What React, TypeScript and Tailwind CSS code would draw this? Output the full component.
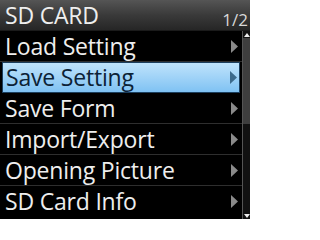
const items = [
  "Load Setting",
  "Save Setting",
  "Save Form",
  "Import/Export",
  "Opening Picture",
  "SD Card Info",
];

// 선택된 항목 (파란색 하이라이트)
const selected = 1;

function Arrow({ dark }: { dark?: boolean }) {
  return (
    <svg width="7" height="13" viewBox="0 0 7 13" className="shrink-0">
      <path d="M0 0 L7 6.5 L0 13 Z" fill={dark ? "#3c6a8c" : "#8a8a8a"} />
    </svg>
  );
}

export default function App() {
  return (
    <div
      className="w-[250px] h-[219px] bg-black flex flex-col overflow-hidden"
      style={{ fontFamily: '"Open Sans", "Noto Sans", sans-serif' }}
    >
      {/* 헤더 */}
      <div className="h-[31px] shrink-0 flex items-end justify-between pl-[5px] pr-[2px] bg-gradient-to-b from-[#555555] via-[#3a3a3a] to-[#262626] border-b border-[#1a1a1a]">
        <span className="text-[23px] leading-[29px] text-[#eeeeee] tracking-[-0.2px]">
          SD CARD
        </span>
        <span className="text-[17px] leading-[18px] text-[#d8d8d8] mb-[1px]">1/2</span>
      </div>

      <div className="flex-1 flex">
        {/* 목록 */}
        <div className="flex-1 flex flex-col">
          {items.map((label, i) => {
            const active = i === selected;
            return (
              <div
                key={label}
                className={
                  active
                    ? "h-[31px] flex items-center justify-between pl-[3px] pr-[2px] mx-[2px] bg-gradient-to-b from-[#bfe3fb] to-[#7fc2f3] border border-[#1c3f5e]"
                    : "h-[31px] flex items-center justify-between pl-[5px] pr-[4px] border-b border-[#2e2e2e] last:border-b-0"
                }
              >
                <span
                  className={
                    active
                      ? "text-[23px] leading-none text-[#0c2236] tracking-[-0.2px]"
                      : "text-[23px] leading-none text-[#eeeeee] tracking-[-0.2px]"
                  }
                >
                  {label}
                </span>
                <Arrow dark={active} />
              </div>
            );
          })}
        </div>

        {/* 스크롤바 */}
        <div className="w-[8px] shrink-0 flex flex-col border-l border-[#555555] bg-[#111111]">
          <div className="h-[7px] flex items-center justify-center">
            <svg width="6" height="4" viewBox="0 0 6 4">
              <path d="M0 4 L3 0 L6 4 Z" fill="#eeeeee" />
            </svg>
          </div>
          <div className="h-[86px] bg-[#3e3e3e]" />
          <div className="flex-1" />
          <div className="h-[7px] flex items-center justify-center">
            <svg width="6" height="4" viewBox="0 0 6 4">
              <path d="M0 0 L3 4 L6 0 Z" fill="#eeeeee" />
            </svg>
          </div>
        </div>
      </div>
    </div>
  );
}
